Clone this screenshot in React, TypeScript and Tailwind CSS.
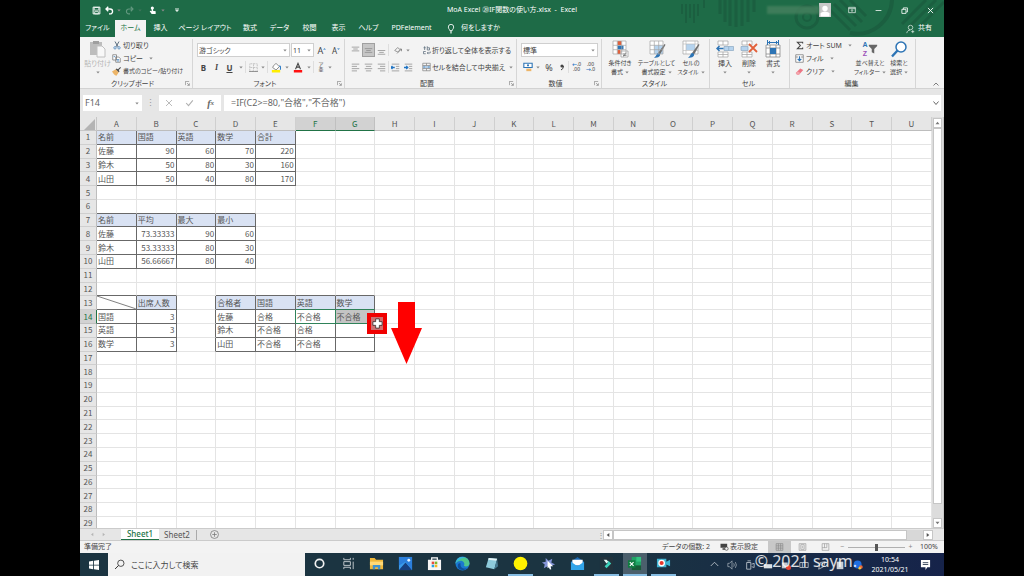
import React from "react";

/* ------------------------------------------------------------------ */
/* Small shared pieces                                                  */
/* ------------------------------------------------------------------ */

type IconProps = {
  w?: number; // drawn width in px
  h?: number; // drawn height in px
  box?: string; // viewBox
  children: React.ReactNode;
};

function Icon({ w = 12, h = 12, box = "0 0 12 12", children }: IconProps) {
  return (
    <svg width={w} height={h} viewBox={box} fill="none" className="shrink-0" aria-hidden="true">
      {children}
    </svg>
  );
}

function Caret() {
  return (
    <Icon w={4} h={3} box="0 0 4 3">
      <path d="M0.3 0.6h3.4L2 2.5z" fill="#8a8a8a" />
    </Icon>
  );
}

function Separator() {
  return <span className="h-3 w-px shrink-0 bg-[#dedede]" />;
}

type ButtonProps = {
  label: string;
  className?: string;
  children: React.ReactNode;
};

function IconButton({ label, className = "w-[13px]", children }: ButtonProps) {
  return (
    <button type="button" aria-label={label} className={`flex h-[14px] shrink-0 items-center justify-center ${className}`}>
      {children}
    </button>
  );
}

/* ------------------------------------------------------------------ */
/* Title bar and ribbon tabs                                            */
/* ------------------------------------------------------------------ */

const tabs = [
  { name: "ファイル", width: "w-[35px]" },
  { name: "ホーム", width: "w-[31px]", active: true },
  { name: "挿入", width: "w-[29px]" },
  { name: "ページ レイアウト", width: "w-[60px]" },
  { name: "数式", width: "w-[30px]" },
  { name: "データ", width: "w-[29px]" },
  { name: "校閲", width: "w-[31px]" },
  { name: "表示", width: "w-[27px]" },
  { name: "ヘルプ", width: "w-[33px]" },
  { name: "PDFelement", width: "w-[53px]" },
];

// Circuit-like pattern drawn behind the right part of the title bar
function TitlePattern() {
  return (
    <svg className="absolute top-0 right-0 h-[37px] w-[270px]" viewBox="0 0 270 37" fill="none" aria-hidden="true">
      <g stroke="#1b5f40" strokeWidth="2">
        <path d="M8 4v10M12 4v19M16 4v14M20 4v19M24 4v12M30 0v8" />
        <path d="M46 0v14M51 0v22M56 0v26M62 0v27M68 0v26M74 0v22M80 0v12" strokeWidth="3" />
        <circle cx="133" cy="17" r="11" strokeWidth="3" />
        <circle cx="133" cy="17" r="4" />
        <path d="M154 8l22 22M160 4l22 22M166 0l22 22M176 0l16 16" strokeWidth="3" />
        <path d="M218 0a35 35 0 0 1-42 33" strokeWidth="4" />
        <path d="M228 24L252 0M236 26L262 0M246 26l24-24" strokeWidth="3" />
      </g>
    </svg>
  );
}

function TitleBar() {
  return (
    <div className="relative grid h-5 grid-cols-[1fr_140px_1fr] items-center text-white">
      <div className="flex items-center pl-[11px]">
        <IconButton label="上書き保存" className="w-[11px]">
          <Icon w={9} h={9}>
            <path d="M1.5 1.5h9v9h-9z" stroke="#fff" strokeWidth="1.3" />
            <path d="M3 2h6v3.5H3zM3.5 7.5h5v3h-5z" stroke="#fff" />
          </Icon>
        </IconButton>
        <IconButton label="元に戻す" className="w-[21px] gap-[3px]">
          <Icon w={10} h={9}>
            <path d="M5 1L2 4l3 3M2.2 4h5.3a3 3 0 0 1 0 6.5H6" stroke="#fff" strokeWidth="1.8" />
          </Icon>
          <Caret />
        </IconButton>
        <IconButton label="やり直し" className="w-[21px] gap-[3px] opacity-30">
          <Icon w={10} h={9}>
            <path d="M7 1l3 3-3 3M9.8 4H4.5a3 3 0 0 0 0 6.5H6" stroke="#fff" strokeWidth="1.5" />
          </Icon>
          <Caret />
        </IconButton>
        <IconButton label="タッチ/マウス モードの切り替え" className="w-[26px] gap-[4px]">
          <Icon w={8} h={10}>
            <circle cx="5" cy="3" r="2.4" fill="#fff" />
            <path d="M4 3h2v4l4 1v4H4L1 8l1-1 2 1z" fill="#fff" />
          </Icon>
          <Caret />
        </IconButton>
        <IconButton label="クイック アクセス ツール バーのユーザー設定" className="w-[14px]">
          <Icon w={4} h={4} box="0 0 4 4">
            <path d="M0 .5h4M.3 1.7h3.4L2 3.8z" stroke="#e6f0ea" strokeWidth=".5" fill="#e6f0ea" />
          </Icon>
        </IconButton>
      </div>

      <h1 className="text-center text-[7px] whitespace-pre">MoA Excel ⑳IF関数の使い方.xlsx  -  Excel</h1>

      <div className="flex items-center justify-end">
        <span className="h-2 w-[52px] bg-[#46815f] opacity-80 blur-[1px]" />
        <span className="mr-[14px] flex h-[14px] w-3 items-end justify-center bg-[#c9c9c9]">
          <Icon w={12} h={13}>
            <circle cx="6" cy="4" r="2.7" fill="#fff" />
            <path d="M1.5 12V8.5q4.5-3 9 0V12z" fill="#fff" />
          </Icon>
        </span>
        <IconButton label="リボンの表示オプション" className="mr-[13px] w-[14px]">
          <Icon w={8} h={8}>
            <path d="M1 2h10v8H1zM1 4h10" stroke="#fff" />
            <path d="M6 9V5.5M4.5 7L6 5.5 7.5 7" stroke="#fff" />
          </Icon>
        </IconButton>
        <IconButton label="最小化" className="mr-[13px] w-[13px]">
          <Icon w={7} h={7}><path d="M1 6h10" stroke="#fff" strokeWidth="1.3" /></Icon>
        </IconButton>
        <IconButton label="元に戻す (縮小)" className="mr-[13px] w-[13px]">
          <Icon w={7} h={7}><path d="M1.5 4h7v7h-7zM4 4V1.5h7v7H9" stroke="#fff" strokeWidth="1.4" /></Icon>
        </IconButton>
        <IconButton label="閉じる" className="mr-[7px] w-[13px]">
          <Icon w={7} h={7}><path d="M1.5 1.5l9 9M10.5 1.5l-9 9" stroke="#fff" strokeWidth="1.5" /></Icon>
        </IconButton>
      </div>
    </div>
  );
}

function RibbonTabs() {
  return (
    <nav className="relative flex h-[17px] text-[7px] text-white">
      {tabs.map((tab) => (
        <button
          key={tab.name}
          type="button"
          className={`${tab.width} shrink-0 whitespace-nowrap ${tab.active ? "bg-[#f3f3f3] text-[#217346]" : ""}`}
        >
          {tab.name}
        </button>
      ))}
      <button type="button" className="ml-[8px] flex items-center gap-[5px] whitespace-nowrap">
        <Icon w={10} h={11}>
          <path d="M4.5 8.5C4.5 7 2.8 6.5 2.8 4.2a3.2 3.2 0 0 1 6.4 0C9.2 6.5 7.5 7 7.5 8.5zM4.8 10h2.4M5 11.3h2" stroke="#fff" />
        </Icon>
        何をしますか
      </button>
      <button type="button" className="mr-[12px] ml-auto flex items-center gap-[3px] whitespace-nowrap">
        <Icon w={9} h={10}>
          <circle cx="6" cy="4" r="3" stroke="#dfece4" />
          <path d="M1 11.5c.5-3 2.5-4 4.5-4M7 9.5h4M9 7.5v4" stroke="#dfece4" />
        </Icon>
        共有
      </button>
    </nav>
  );
}

/* ------------------------------------------------------------------ */
/* Ribbon                                                               */
/* ------------------------------------------------------------------ */

type GroupProps = {
  label: string;
  className: string;
  launcher?: boolean;
  children: React.ReactNode;
};

function RibbonGroup({ label, className, launcher, children }: GroupProps) {
  return (
    <section aria-label={label} className={`flex shrink-0 flex-col border-r border-[#d6d6d6] ${className}`}>
      <div className="h-10">{children}</div>
      <div className="flex h-[10px] items-center pr-[2px]">
        <span className="flex-1 text-center">{label}</span>
        {launcher && (
          <Icon w={5} h={5}>
            <path d="M1 10V1h9M5 5l5 5M10.5 5.5v5h-5" stroke="#777" strokeWidth="1.5" />
          </Icon>
        )}
      </div>
    </section>
  );
}

type BigButtonProps = {
  icon: React.ReactNode;
  lines: string[];
  caretBelow?: boolean;
  disabled?: boolean;
  className: string;
};

function BigButton({ icon, lines, caretBelow, disabled, className }: BigButtonProps) {
  return (
    <button
      type="button"
      disabled={disabled}
      className={`flex shrink-0 flex-col items-center pt-px leading-[9px] whitespace-nowrap ${className} ${disabled ? "text-[#b5b5b5]" : ""}`}
    >
      <span className="mb-px flex h-[18px] items-center">{icon}</span>
      {lines.map((line, index) => (
        <span key={line} className="flex items-center gap-[2px]">
          {line}
          {!caretBelow && index === lines.length - 1 && <Caret />}
        </span>
      ))}
      {caretBelow && <span className="flex h-[8px] items-center"><Caret /></span>}
    </button>
  );
}

type ListButtonProps = {
  icon: React.ReactNode;
  text: string;
  caret?: boolean;
  className?: string;
};

function ListButton({ icon, text, caret, className = "" }: ListButtonProps) {
  return (
    <button type="button" className={`flex h-[13px] items-center gap-[2px] whitespace-nowrap ${className}`}>
      <span className="flex w-[9px] justify-center">{icon}</span>
      {text}
      {caret && <span className="ml-[4px]"><Caret /></span>}
    </button>
  );
}

// Drop-down with a border, used for font name, size and number format
function Dropdown({ label, value, className }: { label: string; value: string; className: string }) {
  return (
    <span className={`relative flex h-[14px] shrink-0 items-center border border-[#cfcfcf] bg-white ${className}`}>
      <select aria-label={label} defaultValue={value} className="w-full appearance-none bg-transparent pl-px text-[7px] outline-none">
        <option>{value}</option>
      </select>
      <span className="pointer-events-none absolute right-[2px]"><Caret /></span>
    </span>
  );
}

const lineSets: Record<string, string> = {
  top: "M1 1.5h10M3 4h6M1 6.5h10",
  middle: "M1 3.5h10M3 6h6M1 8.5h10",
  bottom: "M1 6h10M3 8.5h6M1 11h10",
  left: "M1 1.5h10M1 4.5h7M1 7.5h10M1 10.5h7",
  center: "M1 1.5h10M2.5 4.5h7M1 7.5h10M2.5 10.5h7",
  right: "M1 1.5h10M4 4.5h7M1 7.5h10M4 10.5h7",
};

function AlignIcon({ kind }: { kind: string }) {
  return (
    <Icon w={9} h={9}>
      <path d={lineSets[kind]} stroke="#8c8c8c" />
    </Icon>
  );
}

function IndentIcon({ flip }: { flip?: boolean }) {
  return (
    <Icon w={9} h={9}>
      <path d="M1 1.5h10M6.5 4.5H11M6.5 7.5H11M1 10.5h10" stroke="#8c8c8c" />
      <path d={flip ? "M0 6h5M3 4l2 2-2 2" : "M5 6H0M2 4L0 6l2 2"} stroke="#1f74c4" strokeWidth="1.7" />
    </Icon>
  );
}

function DecimalIcon({ flip }: { flip?: boolean }) {
  return (
    <span className="flex flex-col text-[5px] leading-[5px] text-[#333]">
      <span className={flip ? "" : "text-right"}>{flip ? ".00" : <><b className="text-[#1f74c4]">←</b>.0</>}</span>
      <span className={flip ? "text-right" : ""}>{flip ? <><b className="text-[#1f74c4]">→</b>.0</> : ".00"}</span>
    </span>
  );
}

function GridIcon({ children }: { children?: React.ReactNode }) {
  return (
    <Icon w={18} h={18} box="0 0 18 18">
      <path d="M2 1h13v13H2z" fill="#fff" />
      {children}
      <path d="M2 1h13v13H2zM2 5.3h13M2 9.7h13M6.3 1v13M10.7 1v13" stroke="#a5a5a5" strokeWidth=".7" />
    </Icon>
  );
}

function BrushOverlay() {
  return (
    <>
      <path d="M10 13L16.5 4l1 .8-5.5 9.7z" fill="#6f6f6f" />
      <path d="M6 17.5c2-.5 2-3 3.5-4.3 1.5-.6 3 .8 2.5 2.3-1 2-4 2.5-6 2z" fill="#2d74b5" />
    </>
  );
}

function Ribbon() {
  return (
    <div className="flex h-[52px] border-b border-[#d2d2d2] bg-[#f3f3f3] pt-[2px] text-[7px] leading-[9px] text-[#444]">
      {/* Clipboard */}
      <RibbonGroup label="クリップボード" className="w-[113px]" launcher>
        <div className="flex">
          <BigButton
            className="w-8 pl-[3px]"
            lines={["貼り付け"]}
            caretBelow
            disabled
            icon={
              <Icon w={17} h={18} box="0 0 17 18">
                <path d="M1 2h12v13H1z" fill="#bdbdbd" />
                <path d="M4 1h6v3H4z" fill="#9f9f9f" />
                <path d="M8 6h5l3 3v8H8z" fill="#f8f8f8" stroke="#c0c0c0" />
              </Icon>
            }
          />
          <div className="flex flex-col">
            <ListButton text="切り取り" icon={
              <Icon w={8} h={9}>
                <path d="M3 0l4.5 8M9 0L4.5 8" stroke="#4d6274" strokeWidth="1.4" />
                <circle cx="3" cy="9.5" r="1.8" stroke="#2d74b5" />
                <circle cx="9" cy="9.5" r="1.8" stroke="#2d74b5" />
              </Icon>
            } />
            <ListButton text="コピー" caret icon={
              <Icon w={9} h={9}>
                <path d="M1 1h5v7H1zM5 4h4l2 2v5H5z" fill="#fff" stroke="#777" />
                <path d="M6.5 7.5h3M6.5 9.3h3M2.3 3.5h2" stroke="#2d74b5" />
              </Icon>
            } />
            <ListButton text="書式のコピー/貼り付け" className="text-[6px]" icon={
              <Icon w={9} h={9}>
                <path d="M0 6l5-3 4 4-3 4.5C3 11 2 9 0 6z" fill="#edb568" />
                <path d="M5 3l4 4 1-1-1-2 3-3-1-1-3 3-2-1z" fill="#4b4b4b" />
              </Icon>
            } />
          </div>
        </div>
      </RibbonGroup>

      {/* Font */}
      <RibbonGroup label="フォント" className="w-[152px]" launcher>
        <div className="flex flex-col gap-[3px] pt-[4px] pl-[4px]">
          <div className="flex items-center gap-px">
            <Dropdown label="フォント" value="游ゴシック" className="w-[93px]" />
            <Dropdown label="フォント サイズ" value="11" className="w-[23px]" />
            <IconButton label="フォント サイズの拡大" className="w-[14px] text-[9px]">
              A<Icon w={3} h={8}><path d="M0 4l6-5 6 5z" fill="#1f74c4" /></Icon>
            </IconButton>
            <IconButton label="フォント サイズの縮小" className="w-[12px] text-[8px]">
              A<Icon w={3} h={8}><path d="M0 0h12L6 5z" fill="#1f74c4" /></Icon>
            </IconButton>
          </div>
          <div className="flex items-center text-[8px]">
            <IconButton label="太字"><b>B</b></IconButton>
            <IconButton label="斜体"><i className="font-['Liberation_Serif',serif] font-bold">I</i></IconButton>
            <IconButton label="下線"><b className="underline">U</b></IconButton>
            <IconButton label="下線の種類" className="w-[9px]"><Caret /></IconButton>
            <Separator />
            <IconButton label="罫線" className="w-[21px] gap-[3px]">
              <Icon w={9} h={9}>
                <path d="M1 1h10v10H1zM6 1v10M1 6h10" stroke="#a2a2a2" strokeDasharray="1 1" />
                <path d="M0 11.3h12" stroke="#777" />
              </Icon>
              <Caret />
            </IconButton>
            <Separator />
            <IconButton label="塗りつぶしの色" className="w-[23px] gap-[4px]">
              <Icon w={10} h={11}>
                <path d="M3 4l3-3 4 4-4 4-4-3z" fill="#fff" stroke="#777" />
                <path d="M10 4c2 1 2 3 1 4.5" stroke="#1f74c4" strokeWidth="1.3" />
                <path d="M1 9h10v3H1z" fill="#ffee00" />
              </Icon>
              <Caret />
            </IconButton>
            <IconButton label="フォントの色" className="w-[22px] gap-[4px]">
              <Icon w={10} h={11}>
                <path d="M3 8l3-7 3 7M4 5.5h4" stroke="#444" strokeWidth="1.3" />
                <path d="M1 9h10v3H1z" fill="#f11" />
              </Icon>
              <Caret />
            </IconButton>
            <Separator />
            <IconButton label="ふりがなの表示/非表示" className="w-[22px] gap-[4px]">
              <span className="flex flex-col text-[5px] leading-[5px]"><span>ア</span><span>亜</span></span>
              <Caret />
            </IconButton>
          </div>
        </div>
      </RibbonGroup>

      {/* Alignment */}
      <RibbonGroup label="配置" className="w-[172px]" launcher>
        <div className="flex flex-col gap-[3px] pt-[4px] pl-[4px]">
          <div className="flex items-center">
            <IconButton label="上揃え"><AlignIcon kind="top" /></IconButton>
            <IconButton label="上下中央揃え" className="w-[13px] border border-[#a0a0a0] bg-[#c6c6c6]"><AlignIcon kind="middle" /></IconButton>
            <IconButton label="下揃え"><AlignIcon kind="bottom" /></IconButton>
            <Separator />
            <IconButton label="方向" className="w-[25px] gap-[3px]">
              <Icon w={9} h={9}>
                <path d="M1 6l4-4 3 3-3 3zM4 10l6-6M10 4v3M10 4H7.5" stroke="#777" />
              </Icon>
              <Caret />
            </IconButton>
            <span className="w-[8px]" />
            <button type="button" className="flex items-center gap-px whitespace-nowrap">
              <Icon w={9} h={10}>
                <path d="M2 3h3M3.5 1v5M7 1v5h3V3H7M5 8H2v3h3M11 8v2H7M8.5 8.5L7 10l1.5 1.5" stroke="#5b6b7b" />
              </Icon>
              折り返して全体を表示する
            </button>
          </div>
          <div className="flex items-center">
            <IconButton label="左揃え"><AlignIcon kind="left" /></IconButton>
            <IconButton label="中央揃え"><AlignIcon kind="center" /></IconButton>
            <IconButton label="右揃え"><AlignIcon kind="right" /></IconButton>
            <Separator />
            <IconButton label="インデントを減らす"><IndentIcon /></IconButton>
            <IconButton label="インデントを増やす"><IndentIcon flip /></IconButton>
            <span className="w-[7px]" />
            <button type="button" className="flex items-center gap-px whitespace-nowrap">
              <Icon w={9} h={10}>
                <path d="M1 1h10v10H1zM1 4h10M1 8h10M6 1v3M6 8v3" stroke="#888" />
                <path d="M2 6h8M3.5 5L2 6l1.5 1M8.5 5L10 6 8.5 7" stroke="#1f74c4" strokeWidth=".8" />
              </Icon>
              セルを結合して中央揃え
              <span className="ml-[3px]"><Caret /></span>
            </button>
          </div>
        </div>
      </RibbonGroup>

      {/* Number */}
      <RibbonGroup label="数値" className="w-[85px]" launcher>
        <div className="flex flex-col gap-[3px] pt-[4px] pl-[4px]">
          <Dropdown label="表示形式" value="標準" className="w-[77px]" />
          <div className="flex items-center">
            <IconButton label="通貨表示形式" className="w-[21px] gap-[3px]">
              <Icon w={10} h={10}>
                <path d="M1 1.5h10v5H1z" fill="#fff" stroke="#2d74b5" strokeWidth="1.3" />
                <circle cx="6" cy="4" r="1.3" fill="#2d74b5" />
                <path d="M4 8h6v3H4z" fill="#edb568" />
              </Icon>
              <Caret />
            </IconButton>
            <IconButton label="パーセント スタイル" className="w-[14px] text-[9px]">%</IconButton>
            <IconButton label="桁区切りスタイル" className="w-[12px]">
              <Icon w={4} h={7} box="0 0 4 7"><circle cx="2" cy="2" r="1.6" fill="#444" /><path d="M3.5 2q0 3-2.5 4" stroke="#444" /></Icon>
            </IconButton>
            <Separator />
            <IconButton label="小数点以下の表示桁数を増やす" className="w-[15px]"><DecimalIcon /></IconButton>
            <IconButton label="小数点以下の表示桁数を減らす" className="w-[13px]"><DecimalIcon flip /></IconButton>
          </div>
        </div>
      </RibbonGroup>

      {/* Styles */}
      <RibbonGroup label="スタイル" className="w-[108px]">
        <div className="flex">
          <BigButton className="w-[36px] text-[6px]" lines={["条件付き", "書式"]} icon={
            <GridIcon>
              <path d="M6.5 1h4v4h-4zM6.5 10h3v4h-3z" fill="#e2603a" />
              <path d="M6.5 5.5h6v4h-6z" fill="#2d74b5" />
              <path d="M10 11h7v6h-7z" fill="#fff" stroke="#999" strokeWidth=".7" />
              <path d="M12 14h3.5M12 15.5h3.5M15 12.5l-2.5 4" stroke="#555" strokeWidth=".6" />
            </GridIcon>
          } />
          <BigButton className="w-[37px] text-[6px]" lines={["テーブルとして", "書式設定"]} icon={
            <GridIcon>
              <path d="M6.3 5.3H15V14H6.3z" fill="#b5d3ee" />
              <BrushOverlay />
            </GridIcon>
          } />
          <BigButton className="w-[32px] text-[6px]" lines={["セルの", "スタイル"]} icon={
            <Icon w={18} h={18} box="0 0 18 18">
              <path d="M1 1h15v13H1z" fill="#fff" stroke="#a5a5a5" strokeWidth=".7" />
              <path d="M4 4h9v6H4z" fill="#b5d3ee" />
              <path d="M1 4h15M1 10.5h15M4 1v13M13 1v13" stroke="#b5b5b5" strokeWidth=".6" />
              <BrushOverlay />
            </Icon>
          } />
        </div>
      </RibbonGroup>

      {/* Cells */}
      <RibbonGroup label="セル" className="w-[80px]">
        <div className="flex pl-[3px]">
          <BigButton className="w-6" lines={["挿入"]} caretBelow icon={
            <Icon w={18} h={18} box="0 0 18 18">
              <path d="M2 1h10v4H2zM7 1v4M2 12h10v5H2zM7 12v5M2 14.5h10" fill="#fff" stroke="#a0a0a0" strokeWidth=".7" />
              <path d="M8 6.5h9.5v4H8zM12.7 6.5v4" fill="#b5d3ee" stroke="#8ba7c2" strokeWidth=".7" />
              <path d="M7.5 8.5H1M3.5 6L1 8.5 3.5 11" stroke="#2d74b5" strokeWidth="1.5" />
            </Icon>
          } />
          <BigButton className="w-6" lines={["削除"]} caretBelow icon={
            <Icon w={18} h={18} box="0 0 18 18">
              <path d="M2 1h10v4H2zM7 1v4M2 12h10v5H2zM7 12v5M2 14.5h10" fill="#fff" stroke="#a0a0a0" strokeWidth=".7" />
              <path d="M1 6.5h7v4H1z" fill="#b5d3ee" stroke="#8ba7c2" strokeWidth=".7" />
              <path d="M9 4l8 8M17 4l-8 8" stroke="#e2603a" strokeWidth="1.8" />
            </Icon>
          } />
          <BigButton className="w-6" lines={["書式"]} caretBelow icon={
            <Icon w={18} h={18} box="0 0 18 18">
              <path d="M2 5h14v12H2zM6 5v12M12 5v12M2 8h14M2 14h14" fill="#fff" stroke="#8c8c8c" strokeWidth=".8" />
              <path d="M6 8h6v6H6z" fill="#2d74b5" />
              <path d="M4 2.5h10M3.5 0v5M14.5 0v5M6 1L4.5 2.5 6 4M12 1l1.5 1.5L12 4" stroke="#2d74b5" />
            </Icon>
          } />
        </div>
      </RibbonGroup>

      {/* Editing */}
      <RibbonGroup label="編集" className="w-[126px]">
        <div className="flex pl-[5px]">
          <div className="flex w-[60px] flex-col">
            <ListButton text="オート SUM" caret icon={
              <Icon w={8} h={9}><path d="M10 3V1H2l4.5 5L2 11h8V9" stroke="#444" strokeWidth="1.6" /></Icon>
            } />
            <ListButton text="フィル" caret icon={
              <Icon w={9} h={9}>
                <path d="M1 1h10v10H1zM1 4h3M8 4h3" fill="#fff" stroke="#777" />
                <path d="M6 3v6M3.5 6.5L6 9l2.5-2.5" stroke="#2d74b5" strokeWidth="1.6" />
              </Icon>
            } />
            <ListButton text="クリア" caret icon={
              <Icon w={9} h={9}><path d="M1 8l6-6 4 2-6 6.5H3z" fill="#ec7684" /><path d="M1 8l2.5-2.5L7 8l-2 2.5H3z" fill="#f3a4ac" /></Icon>
            } />
          </div>
          <BigButton className="w-[30px] text-[6px]" lines={["並べ替えと", "フィルター"]} icon={
            <span className="flex items-center">
              <span className="flex flex-col font-['Liberation_Sans',sans-serif] text-[7px] leading-[9px] font-bold">
                <span className="text-[#2d74b5]">A</span>
                <span className="text-[#9b4fb8]">Z</span>
              </span>
              <Icon w={10} h={10}><path d="M1 1h10v1.5L7.5 6v5.5L4.5 10V6L1 2.5z" fill="#666" /></Icon>
            </span>
          } />
          <BigButton className="w-[28px] text-[6px]" lines={["検索と", "選択"]} icon={
            <Icon w={17} h={17} box="0 0 17 17">
              <circle cx="10" cy="6" r="5" fill="#fff" stroke="#2d74b5" strokeWidth="1.5" />
              <path d="M6.5 9.5L1 15.5" stroke="#2d74b5" strokeWidth="2.4" />
            </Icon>
          } />
        </div>
      </RibbonGroup>

      <button type="button" aria-label="リボンを折りたたむ" className="mr-[5px] mb-px ml-auto self-end">
        <Icon w={6} h={6}><path d="M1 9l5-5 5 5" stroke="#555" strokeWidth="1.5" /></Icon>
      </button>
    </div>
  );
}

/* ------------------------------------------------------------------ */
/* Formula bar                                                          */
/* ------------------------------------------------------------------ */

function FormulaBar() {
  return (
    <div className="flex h-7 items-center bg-[#e6e6e6] pr-[3px] pl-[3px] text-[9px] text-[#666]">
      <div className="flex h-4 w-[59px] items-center bg-white pr-[3px] pl-[2px]">
        <input aria-label="名前ボックス" defaultValue="F14" className="w-full min-w-0 bg-transparent outline-none" />
        <Caret />
      </div>
      <span className="w-[17px] text-center text-[#999]">⋮</span>
      <div className="flex h-4 w-[62px] items-center justify-around bg-white">
        <IconButton label="キャンセル"><Icon w={8} h={8}><path d="M1.5 1.5l9 9M10.5 1.5l-9 9" stroke="#b0b0b0" strokeWidth="1.3" /></Icon></IconButton>
        <IconButton label="入力"><Icon w={9} h={8}><path d="M1 6l3.5 4L11 2" stroke="#b0b0b0" strokeWidth="1.6" /></Icon></IconButton>
        <IconButton label="関数の挿入" className="w-[13px] font-['Liberation_Serif',serif] text-[10px] font-bold italic">f<span className="text-[7px]">x</span></IconButton>
      </div>
      <div className="ml-[3px] flex h-4 flex-1 items-center bg-white pr-[2px] pl-[7px]">
        <input aria-label="数式バー" defaultValue={'=IF(C2>=80,"合格","不合格")'} className="w-full bg-transparent outline-none" />
        <Icon w={6} h={6}><path d="M1 3l5 6 5-6" stroke="#666" strokeWidth="2" /></Icon>
      </div>
    </div>
  );
}

/* ------------------------------------------------------------------ */
/* Worksheet                                                            */
/* ------------------------------------------------------------------ */

const columns = "ABCDEFGHIJKLMNOPQRSTU".split("");
const rowNumbers = Array.from({ length: 29 }, (_, index) => index + 1);

// A block is a bordered table on the sheet; its first row is the header
type Block = { row: number; col: number; data: string[][] };

const blocks: Block[] = [
  {
    row: 1,
    col: 0,
    data: [
      ["名前", "国語", "英語", "数学", "合計"],
      ["佐藤", "90", "60", "70", "220"],
      ["鈴木", "50", "80", "30", "160"],
      ["山田", "50", "40", "80", "170"],
    ],
  },
  {
    row: 7,
    col: 0,
    data: [
      ["名前", "平均", "最大", "最小"],
      ["佐藤", "73.33333", "90", "60"],
      ["鈴木", "53.33333", "80", "30"],
      ["山田", "56.66667", "80", "40"],
    ],
  },
  {
    row: 13,
    col: 0,
    data: [
      ["", "出席人数"],
      ["国語", "3"],
      ["英語", "3"],
      ["数学", "3"],
    ],
  },
  {
    row: 13,
    col: 3,
    data: [
      ["合格者", "国語", "英語", "数学"],
      ["佐藤", "合格", "不合格", "不合格"],
      ["鈴木", "不合格", "合格", ""],
      ["山田", "不合格", "不合格", ""],
    ],
  },
];

function findCell(row: number, col: number) {
  for (const block of blocks) {
    const text = block.data[row - block.row]?.[col - block.col];
    if (text !== undefined) {
      return { text, header: row === block.row };
    }
  }
  return null;
}

function SheetCell({ row, col }: { row: number; col: number }) {
  const cell = findCell(row, col);
  const selectedF14 = row === 14 && col === 5;
  const selectedG14 = row === 14 && col === 6;
  const diagonal = row === 13 && col === 0;

  // Right and bottom edges are shared with the neighbouring cells
  const right = selectedF14 || (row === 14 && col === 4)
    ? "border-r-[#2f8259]"
    : cell || findCell(row, col + 1) ? "border-r-[#686868]" : "border-r-[#e4e4e4]";
  const bottom = selectedF14 || selectedG14 || (row === 13 && (col === 5 || col === 6))
    ? "border-b-[#2f8259]"
    : cell || findCell(row + 1, col) ? "border-b-[#686868]" : "border-b-[#e4e4e4]";
  const fill = selectedG14 ? "bg-[#c4c4c4]" : cell?.header && !diagonal ? "bg-[#d9e2f3]" : "";
  const align = cell && /^[\d.]+$/.test(cell.text) ? "text-right" : "text-left";

  return (
    <td className={`relative border-r border-b p-0 px-px whitespace-nowrap ${right} ${bottom} ${fill} ${align}`}>
      {cell?.text}
      {diagonal && (
        <svg className="absolute inset-0 h-full w-full" viewBox="0 0 40 14" preserveAspectRatio="none" aria-hidden="true">
          <path d="M0 0L40 14" stroke="#555" strokeWidth="0.8" />
        </svg>
      )}
    </td>
  );
}

// Red frame round the fill handle, with the arrow showing the drag direction
function DragHint() {
  return (
    <>
      <div className="absolute top-[196px] left-[287px] flex h-[21px] w-5 items-center justify-center border-4 border-[#f00000] bg-[#cf6f70]">
        <Icon w={11} h={11}>
          <path d="M4 1h4v3h3v4H8v3H4V8H1V4h3z" fill="#fff" stroke="#222" strokeWidth=".8" />
        </Icon>
      </div>
      <svg className="absolute top-[185px] left-[311px]" width="31" height="62" viewBox="0 0 31 62" aria-hidden="true">
        <path d="M7 0h17v26h7L15.5 62 0 26h7z" fill="#ff0000" />
      </svg>
    </>
  );
}

function Worksheet() {
  return (
    <div className="relative flex min-h-0 flex-1 overflow-hidden bg-white">
      <div className="min-w-0 flex-1">
        <table className="h-[414px] w-full table-fixed border-separate border-spacing-0 font-['Noto_Sans_CJK_JP',sans-serif] text-[8px] leading-[12px] text-[#555] [font-feature-settings:normal]">
          <thead>
            <tr className="h-[14px] bg-[#e6e6e6]">
              <th aria-label="すべて選択" className="w-[17px] border-r border-b border-[#c6c6c6] p-0">
                <svg className="mt-px ml-[4px]" width="11" height="11" viewBox="0 0 11 11" aria-hidden="true"><path d="M11 0v11H0z" fill="#b4b4b4" /></svg>
              </th>
              {columns.map((name) => {
                const active = name === "F" || name === "G";
                return (
                  <th
                    key={name}
                    scope="col"
                    className={`border-r border-b p-0 font-normal ${active ? "border-r-[#c0c0c0] border-b-[#217346] bg-[#d2d2d2] text-[#217346]" : "border-r-[#cfcfcf] border-b-[#bdbdbd]"}`}
                  >
                    {name}
                  </th>
                );
              })}
            </tr>
          </thead>
          <tbody>
            {rowNumbers.map((row) => (
              <tr key={row}>
                <th
                  scope="row"
                  className={`border-r border-b p-0 font-normal ${row === 14 ? "border-r-[#217346] border-b-[#c0c0c0] bg-[#d2d2d2] text-[#217346]" : "border-r-[#bdbdbd] border-b-[#cfcfcf] bg-[#e6e6e6]"}`}
                >
                  {row}
                </th>
                {columns.map((name, col) => (
                  <SheetCell key={name} row={row} col={col} />
                ))}
              </tr>
            ))}
          </tbody>
        </table>
      </div>

      {/* Vertical scroll bar */}
      <div className="flex w-3 shrink-0 flex-col border-r border-[#c8c8c8] bg-[#dcdcdc] px-px">
        <button type="button" aria-label="上へスクロール" className="mt-px flex h-[10px] items-center justify-center border border-[#c6c6c6] bg-white">
          <Icon w={5} h={4}><path d="M0 10h12L6 2z" fill="#777" /></Icon>
        </button>
        <div className="flex-1 border border-[#c6c6c6] bg-white" />
        <div className="h-[14px]" />
        <button type="button" aria-label="下へスクロール" className="flex h-[10px] items-center justify-center border border-[#c6c6c6] bg-white">
          <Icon w={5} h={4}><path d="M0 2h12L6 10z" fill="#777" /></Icon>
        </button>
      </div>

      <DragHint />
    </div>
  );
}

/* ------------------------------------------------------------------ */
/* Sheet tabs and status bar                                            */
/* ------------------------------------------------------------------ */

function SheetTabs() {
  return (
    <div className="flex h-[13px] shrink-0 items-center border-t border-b border-[#cbcbcb] bg-[#e6e6e6] text-[8px] leading-[10px] text-[#555]">
      <div className="flex w-[41px] gap-[8px] pl-[10px]">
        <Icon w={4} h={5}><path d="M10 1L3 6l7 5z" fill="#b5b5b5" /></Icon>
        <Icon w={4} h={5}><path d="M2 1l7 5-7 5z" fill="#b5b5b5" /></Icon>
      </div>
      <button type="button" className="h-full w-[38px] border-b border-[#217346] bg-white font-medium text-[#217346]">Sheet1</button>
      <button type="button" className="w-[38px] border-r border-[#aaa] pr-px">Sheet2</button>
      <button type="button" aria-label="新しいシート" className="ml-[13px]">
        <Icon w={9} h={9}><circle cx="6" cy="6" r="5.3" stroke="#777" /><path d="M6 3v6M3 6h6" stroke="#777" /></Icon>
      </button>
      <div className="ml-auto flex h-[10px] w-[347px] items-center">
        <span className="w-[6px] text-[#999]">⋮</span>
        <button type="button" aria-label="左へスクロール" className="flex h-[10px] w-[10px] items-center justify-center border border-[#c6c6c6] bg-white">
          <Icon w={4} h={4}><path d="M10 0v12L2 6z" fill="#555" /></Icon>
        </button>
        <div className="h-[10px] flex-1 border border-[#c6c6c6] bg-white" />
        <div className="h-[10px] w-4 bg-[#d8d8d8]" />
        <button type="button" aria-label="右へスクロール" className="mr-[11px] flex h-[10px] w-[10px] items-center justify-center border border-[#c6c6c6] bg-white">
          <Icon w={4} h={4}><path d="M2 0v12l8-6z" fill="#555" /></Icon>
        </button>
      </div>
    </div>
  );
}

function StatusBar() {
  return (
    <div className="flex h-3 shrink-0 items-center bg-[#f3f3f3] pl-1 text-[7px] text-[#444]">
      <span>準備完了</span>
      <span className="ml-auto">データの個数: 2</span>
      <button type="button" className="ml-[10px] flex items-center gap-px">
        <Icon w={9} h={8}>
          <path d="M0 1h10v6H0zM3 8h4v2H3z" fill="#444" />
          <circle cx="9" cy="8.5" r="2.5" fill="#f3f3f3" stroke="#444" />
        </Icon>
        表示設定
      </button>
      <button type="button" aria-label="標準" className="ml-[10px] flex h-3 w-[23px] items-center justify-center bg-[#c8c8c8]">
        <Icon w={9} h={8}><path d="M1 1h10v10H1zM1 4.3h10M1 7.7h10M4.3 1v10M7.7 1v10" stroke="#888" /></Icon>
      </button>
      <button type="button" aria-label="ページ レイアウト" className="flex h-3 w-[23px] items-center justify-center">
        <Icon w={9} h={8}><path d="M1 1h10v10H1zM3.5 2.5h5v7h-5zM5 5h2M5 7h2" stroke="#999" /></Icon>
      </button>
      <button type="button" aria-label="改ページ プレビュー" className="flex h-3 w-[23px] items-center justify-center">
        <Icon w={9} h={8}><path d="M1 1h10v10H1zM4.5 1v6H8V1M1 7h4" stroke="#999" /></Icon>
      </button>
      <button type="button" aria-label="縮小" className="w-[11px] text-[#888]">−</button>
      <input
        type="range"
        aria-label="ズーム"
        min={10}
        max={190}
        defaultValue={100}
        className="h-[7px] w-[57px] appearance-none bg-transparent [&::-webkit-slider-runnable-track]:h-px [&::-webkit-slider-runnable-track]:bg-[#b0b0b0] [&::-webkit-slider-thumb]:-mt-[3px] [&::-webkit-slider-thumb]:h-[7px] [&::-webkit-slider-thumb]:w-[3px] [&::-webkit-slider-thumb]:appearance-none [&::-webkit-slider-thumb]:bg-[#555]"
      />
      <button type="button" aria-label="拡大" className="w-[11px] text-[#888]">+</button>
      <span className="w-[28px] pl-[4px]">100%</span>
    </div>
  );
}

/* ------------------------------------------------------------------ */
/* Windows taskbar                                                      */
/* ------------------------------------------------------------------ */

type TaskbarApp = { name: string; running?: boolean; focused?: boolean; icon: React.ReactNode };

const apps: TaskbarApp[] = [
  { name: "Cortana", icon: <circle cx="8" cy="8" r="4.5" stroke="#f2f2f2" strokeWidth="1.8" /> },
  { name: "タスク ビュー", icon: <path d="M3 2v2h7V2M3 6h7v4H3zM3 14v-2h7v2M13 2v2M13 6v8" stroke="#c5ccd0" /> },
  {
    name: "エクスプローラー",
    icon: (
      <>
        <path d="M1 2h5l1.5 2H15v10H1z" fill="#f0b73a" />
        <path d="M1 6h14v4H1z" fill="#ffd977" />
        <path d="M4 14V9.5h8V14h-2.5v-2h-3v2z" fill="#3f92d0" />
      </>
    ),
  },
  {
    name: "フォト",
    icon: (
      <>
        <path d="M1 1h14v14H1z" fill="#3a9bea" />
        <path d="M1 15L8 7l7 8z" fill="#17407f" />
        <path d="M1 10V1h14v14L8 6z" fill="#2b7fdc" />
        <circle cx="11.5" cy="4.5" r="1.5" fill="#e5f4ff" />
      </>
    ),
  },
  {
    name: "Microsoft Store",
    icon: (
      <>
        <path d="M5 5V2h6v3" stroke="#fff" strokeWidth="1.3" />
        <path d="M1 4h14v11H1z" fill="#f6f6f6" />
        <path d="M5 6h2.7v2.7H5z" fill="#e84c3d" />
        <path d="M8.3 6H11v2.7H8.3z" fill="#7cb82f" />
        <path d="M5 9.3h2.7V12H5z" fill="#2aa2e0" />
        <path d="M8.3 9.3H11V12H8.3z" fill="#f6b71e" />
      </>
    ),
  },
  {
    name: "Microsoft Edge",
    icon: (
      <>
        <circle cx="8" cy="8" r="7.5" fill="#1b78cf" />
        <path d="M1 6a7.5 7.5 0 0 1 14.5 2c0 3-4 4-6 2.5C11 8 9 5 5.5 5.2 3 5.3 1.5 6.5.5 8z" fill="#4fc48d" />
        <path d="M1 6C3 1 8 .3 11 2 6 2 4 4 .5 8z" fill="#35b5e0" />
        <path d="M6 8c-1 4 3 6.5 7 5-3 3-9 2.5-10-1.5C2.6 9 4 7 6 8z" fill="#0e4f9b" />
      </>
    ),
  },
  {
    name: "メモ帳",
    icon: (
      <>
        <path d="M5 2l9 1-3 11-9-2z" fill="#8ecbdc" />
        <path d="M5 2l9 1-.5 2-9-1z" fill="#e5f3f6" />
        <path d="M11 14l3-11 1 8z" fill="#467a91" />
      </>
    ),
  },
  { name: "ポインター", running: true, icon: <circle cx="8" cy="8" r="7.3" fill="#fff200" /> },
  {
    name: "マウス ツール",
    icon: (
      <>
        <path d="M1 7l4-1V2l3 3 4-2-1 4 4 2-4 1-1 4-3-3-4 2 1-4z" fill="#8595d8" />
        <path d="M7 5l6 6H10l1 3-1.5.5-1-2.5L7 13z" fill="#fff" />
      </>
    ),
  },
  {
    name: "メール",
    icon: (
      <>
        <path d="M1 6l7-5 7 5v9H1z" fill="#1766b0" />
        <path d="M2.5 4h11v6h-11z" fill="#fff" />
        <path d="M1 6l7 5 7-5v9H1z" fill="#32a5ea" />
      </>
    ),
  },
  {
    name: "Filmora",
    running: true,
    icon: (
      <>
        <path d="M1 1h14v14H1z" fill="#22333d" />
        <path d="M5 4h3l2 2-2 2z" fill="#e5f8f5" />
        <path d="M10 5l3 3-5 5-2-2 3-3z" fill="#3ed3bd" />
      </>
    ),
  },
  {
    name: "Excel",
    running: true,
    focused: true,
    icon: (
      <>
        <path d="M5 1h10v14H5z" fill="#21a366" />
        <path d="M10 1h5v5h-5z" fill="#33c481" />
        <path d="M5 10h10v5H5z" fill="#185c37" />
        <path d="M1 4.5h8v8H1z" fill="#107c41" />
        <path d="M3 6.5l4 4M7 6.5l-4 4" stroke="#fff" strokeWidth="1.2" />
      </>
    ),
  },
  {
    name: "画面録画",
    running: true,
    icon: (
      <>
        <path d="M1 3h10v9H1zM11 6l4-2v7l-4-2z" fill="#3fb3d2" />
        <circle cx="6" cy="7.5" r="3.6" fill="#fff" />
        <circle cx="6" cy="7.5" r="2.2" fill="#e6352b" />
      </>
    ),
  },
];

// Notification area, read from left to right
function Tray() {
  return (
    <div className="flex items-center gap-[8px]">
      <Icon w={9} h={9}><path d="M1 8l5-5 5 5" stroke="#d5dbe0" /></Icon>
      <Icon w={10} h={10}><path d="M1 4h2l3-3v10L3 8H1zM8 4q1.5 2 0 4M10 2.5q2.5 3.5 0 7" stroke="#b5bec5" strokeWidth=".8" /></Icon>
      <Icon w={10} h={10}><path d="M2 3h5v8H2zM8 5l3-1v5L8 8M3 1h4" stroke="#c0c8cf" /></Icon>
      <Icon w={10} h={10}><path d="M1 5h10v5H1z" fill="#dce2e6" /></Icon>
      <Icon w={10} h={10}><path d="M1 3h7v7H1z" fill="#c5cbd1" /><circle cx="9" cy="9" r="3" fill="#e84436" /></Icon>
      <Icon w={10} h={10}><path d="M1 3h10v6H1zM4 3v6" stroke="#c0c8cf" /></Icon>
      <Icon w={10} h={10}><path d="M2 11l2-8 6-1-2 6z" stroke="#c0c8cf" /></Icon>
      <Icon w={10} h={10}><path d="M2 2h8v9H2z" fill="#c9d0d5" /></Icon>
      <Icon w={10} h={10}>
        <circle cx="5.5" cy="5.5" r="4.8" fill="#1e6fe0" />
        <circle cx="9.5" cy="8.5" r="2.2" fill="#ef6a3a" />
        <circle cx="8" cy="10" r="1.5" fill="#f4cf3f" />
      </Icon>
    </div>
  );
}

function Taskbar() {
  return (
    <footer className="relative flex h-[23px] shrink-0 bg-linear-to-r from-[#1b3441] from-60% to-[#16234a]">
      <button type="button" aria-label="スタート" className="flex w-[28px] items-center justify-center">
        <Icon w={10} h={10}><path d="M0 1.8l5-.8v4.6H0zM6 .9l6-.9v5.6H6zM0 6.5h5V11l-5-.8zM6 6.5h6V12l-6-.9z" fill="#fff" /></Icon>
      </button>
      <label className="flex w-[197px] items-center gap-[6px] bg-[#f2f2f2] pl-[7px]">
        <Icon w={10} h={11}><circle cx="7" cy="4.5" r="3.8" stroke="#333" /><path d="M4.2 7.2L0 11.5" stroke="#333" strokeWidth="1.2" /></Icon>
        <input aria-label="検索" placeholder="ここに入力して検索" className="w-[150px] bg-transparent text-[8px] outline-none placeholder:text-[#444]" />
      </label>
      <div className="flex w-[373px] shrink-0">
        {apps.map((app) => (
          <button key={app.name} type="button" aria-label={app.name} className="flex flex-1 px-[2px]">
            <span
              className={`flex flex-1 items-center justify-center border-b-2 ${app.running ? "border-[#86bde3]" : "border-transparent"} ${app.focused ? "bg-[#4b5f6c]" : ""}`}
            >
              <Icon w={15} h={15} box="0 0 16 16">{app.icon}</Icon>
            </span>
          </button>
        ))}
      </div>
      <div className="ml-auto flex items-center">
        <Tray />
        <time className="ml-[6px] w-[42px] text-center text-[7px] leading-[10px] text-white">
          10:54<br />2021/05/21
        </time>
        <button type="button" aria-label="アクション センター" className="mr-[11px] ml-[7px] flex w-[15px] justify-center">
          <Icon w={11} h={11}><path d="M1 1h10v8H8l-2 3V9H1z" fill="#fff" /><path d="M3 4h6M3 6h6" stroke="#34445a" /></Icon>
        </button>
      </div>
      <p className="absolute right-[87px] bottom-[4px] font-['Noto_Sans',sans-serif] text-[16px] leading-[22px] whitespace-nowrap text-white/85">© 2021 saym.</p>
    </footer>
  );
}

export default function App() {
  return (
    <div className="h-screen bg-black px-20 font-['Noto_Sans','Noto_Sans_CJK_JP',sans-serif] [font-feature-settings:'palt']">
      <main className="flex h-full flex-col overflow-hidden">
        <header className="relative shrink-0 bg-[#1e6b47]">
          <TitlePattern />
          <TitleBar />
          <RibbonTabs />
        </header>
        <Ribbon />
        <FormulaBar />
        <Worksheet />
        <SheetTabs />
        <StatusBar />
        <Taskbar />
      </main>
    </div>
  );
}
